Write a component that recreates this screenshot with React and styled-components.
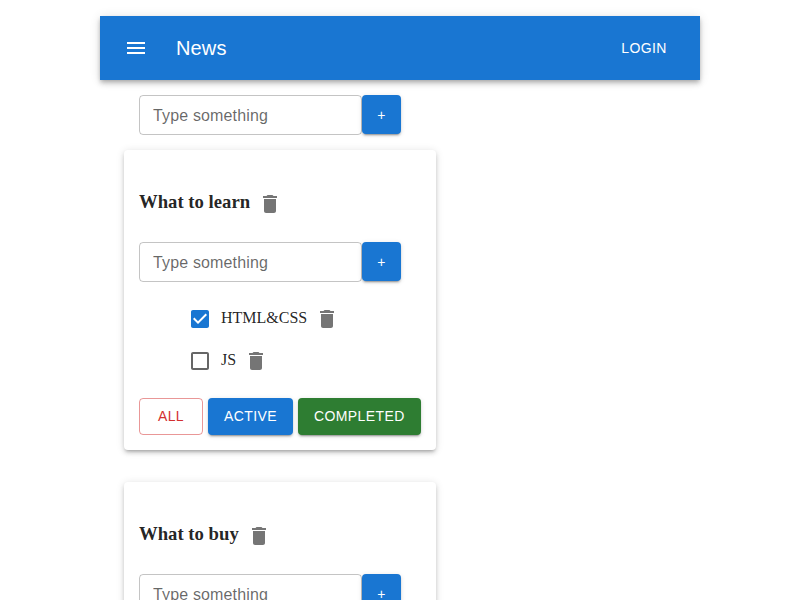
import React from "react";
import styled, { createGlobalStyle, css } from "styled-components";

const GlobalStyle = createGlobalStyle`
  *, *::before, *::after { box-sizing: border-box; }
  body {
    margin: 0;
    height: 600px;
    overflow: hidden;
    background: #fff;
    color: rgba(0, 0, 0, 0.87);
    font-family: "Liberation Serif", "Times New Roman", serif;
    font-size: 16px;
  }
`;

const sans = `"Liberation Sans", Arial, sans-serif`;

const Page = styled.div`
  width: 600px;
  margin: 0 auto;
  padding-top: 16px;
`;

const AppBar = styled.header`
  display: flex;
  align-items: center;
  height: 64px;
  padding: 0 24px;
  background: #1976d2;
  color: #fff;
  box-shadow: 0 2px 4px -1px rgba(0, 0, 0, 0.2), 0 4px 5px rgba(0, 0, 0, 0.14),
    0 1px 10px rgba(0, 0, 0, 0.12);
`;

const MenuButton = styled.button`
  display: flex;
  padding: 12px;
  margin: 0 16px 0 -12px;
  border: 0;
  background: none;
  color: inherit;
`;

const Title = styled.h6`
  flex: 1;
  margin: 0;
  font: 500 20px/32px ${sans};
  letter-spacing: 0.15px;
`;

const Button = styled.button`
  min-width: 64px;
  padding: 6px 16px;
  border: 0;
  border-radius: 4px;
  font: 500 14px/24.5px ${sans};
  letter-spacing: 0.4px;
  text-transform: uppercase;
  white-space: nowrap;
  color: #fff;
  background: ${(p) => p.$color};
  box-shadow: 0 3px 1px -2px rgba(0, 0, 0, 0.2), 0 2px 2px rgba(0, 0, 0, 0.14),
    0 1px 5px rgba(0, 0, 0, 0.12);
  ${(p) =>
    p.$variant === "outlined" &&
    css`
      padding: 5px 15px;
      border: 1px solid rgba(211, 47, 47, 0.5);
      color: #d32f2f;
      background: transparent;
      box-shadow: none;
    `}
  ${(p) =>
    p.$variant === "text" &&
    css`
      padding: 6px 8px;
      background: transparent;
      box-shadow: none;
    `}
`;

const Content = styled.main`
  display: flex;
  flex-direction: column;
  align-items: flex-start;
  padding: 15px 24px 0;
`;

const Form = styled.form`
  display: flex;
  align-items: flex-start;
  height: 40px;
  margin-left: ${(p) => p.$indent || 0}px;
`;

const Field = styled.input`
  width: 223px;
  height: 40px;
  padding: 9px 13px 7px;
  border: 1px solid rgba(0, 0, 0, 0.23);
  border-radius: 4px;
  outline: 0;
  background: transparent;
  color: inherit;
  font: 16px/23px ${sans};
  letter-spacing: 0.15px;
  &::placeholder {
    color: rgba(0, 0, 0, 0.6);
    opacity: 1;
  }
`;

const AddButton = styled(Button)`
  min-width: 39px;
  width: 39px;
  height: 39px;
  padding: 1px 0 0;
`;

const Card = styled.section`
  width: 312px;
  height: 300px;
  margin: 15px 0 17px;
  padding: 34px 15px 15px;
  border-radius: 4px;
  background: #fff;
  box-shadow: 0 3px 3px -2px rgba(0, 0, 0, 0.2), 0 3px 4px rgba(0, 0, 0, 0.14),
    0 1px 8px rgba(0, 0, 0, 0.12);
`;

const CardHead = styled.div`
  display: flex;
  align-items: center;
  height: 40px;
  margin-bottom: 18px;
`;

const CardTitle = styled.h3`
  margin: 0 0 5px;
  font-size: 18.72px;
  line-height: 21px;
`;

const DeleteButton = styled.button`
  display: flex;
  padding: 8px;
  border: 0;
  background: none;
  color: rgba(0, 0, 0, 0.54);
`;

const TaskList = styled.ul`
  margin: 16px 0;
  padding: 0 0 0 40px;
  list-style: none;
`;

const Task = styled.li`
  display: flex;
  align-items: center;
  height: 42px;
`;

const Checkbox = styled.span`
  display: flex;
  padding: 9px;
  color: ${(p) => (p.$checked ? "#1976d2" : "rgba(0, 0, 0, 0.6)")};
`;

const TaskName = styled.span`
  line-height: 18px;
  margin-bottom: 2px;
`;

const Filters = styled.div`
  display: flex;
  gap: 5px;
`;

const Glyph = styled.svg`
  display: block;
  width: 24px;
  height: 24px;
  fill: currentColor;
`;

const paths = {
  menu: "M3 18h18v-2H3v2zm0-5h18v-2H3v2zm0-7v2h18V6H3z",
  trash:
    "M6 19c0 1.1.9 2 2 2h8c1.1 0 2-.9 2-2V7H6v12zM19 4h-3.5l-1-1h-5l-1 1H5v2h14V4z",
  checked:
    "M19 3H5c-1.11 0-2 .9-2 2v14c0 1.1.89 2 2 2h14c1.11 0 2-.9 2-2V5c0-1.1-.89-2-2-2zm-9 14l-5-5 1.41-1.41L10 14.17l7.59-7.59L19 8l-9 9z",
  unchecked:
    "M19 5v14H5V5h14m0-2H5c-1.1 0-2 .9-2 2v14c0 1.1.9 2 2 2h14c1.1 0 2-.9 2-2V5c0-1.1-.9-2-2-2z",
};

const Icon = ({ name }) => (
  <Glyph viewBox="0 0 24 24" aria-hidden="true">
    <path d={paths[name]} />
  </Glyph>
);

const AddItemForm = ({ indent }) => (
  <Form $indent={indent} onSubmit={(e) => e.preventDefault()}>
    <Field placeholder="Type something" />
    <AddButton $color="#1976d2">+</AddButton>
  </Form>
);

const Delete = () => (
  <DeleteButton aria-label="Delete">
    <Icon name="trash" />
  </DeleteButton>
);

const lists = [
  {
    title: "What to learn",
    tasks: [
      { name: "HTML&CSS", done: true },
      { name: "JS", done: false },
    ],
  },
  {
    title: "What to buy",
    tasks: [],
  },
];

const TodoList = ({ title, tasks }) => (
  <Card>
    <CardHead>
      <CardTitle>{title}</CardTitle>
      <Delete />
    </CardHead>
    <AddItemForm />
    {tasks.length > 0 && (
      <>
        <TaskList>
          {tasks.map((t) => (
            <Task key={t.name}>
              <Checkbox $checked={t.done} role="checkbox" aria-checked={t.done}>
                <Icon name={t.done ? "checked" : "unchecked"} />
              </Checkbox>
              <TaskName>{t.name}</TaskName>
              <Delete />
            </Task>
          ))}
        </TaskList>
        <Filters>
          <Button $variant="outlined">All</Button>
          <Button $color="#1976d2">Active</Button>
          <Button $color="#2e7d32">Completed</Button>
        </Filters>
      </>
    )}
  </Card>
);

export default function App() {
  return (
    <>
      <GlobalStyle />
      <Page>
        <AppBar>
          <MenuButton aria-label="Menu">
            <Icon name="menu" />
          </MenuButton>
          <Title>News</Title>
          <Button $variant="text">Login</Button>
        </AppBar>
        <Content>
          <AddItemForm indent={15} />
          {lists.map((l) => (
            <TodoList key={l.title} {...l} />
          ))}
        </Content>
      </Page>
    </>
  );
}
